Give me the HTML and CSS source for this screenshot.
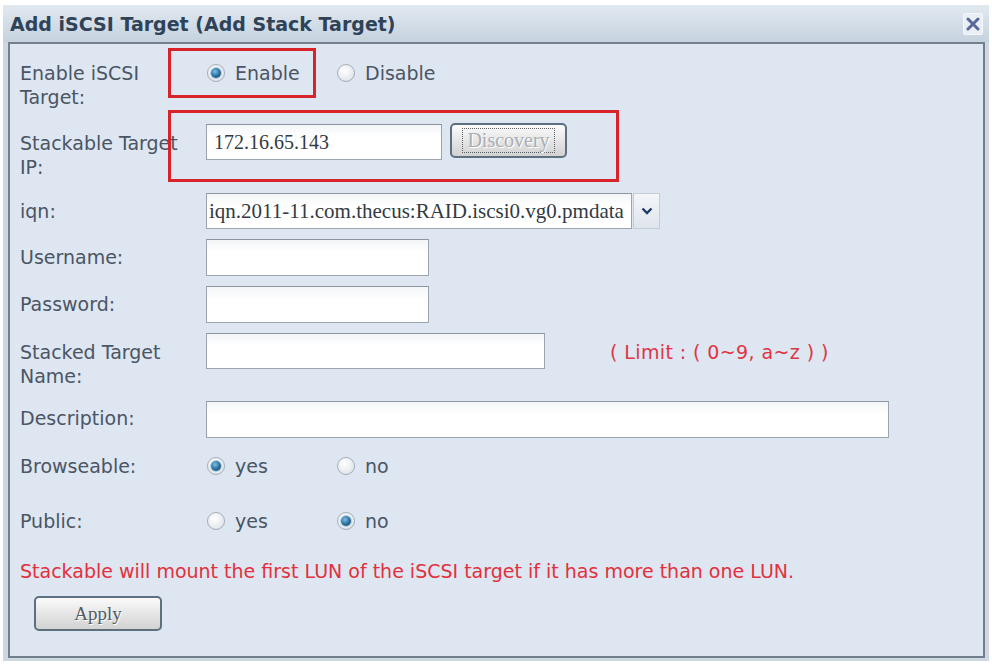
FILE: index.html
```html
<!DOCTYPE html>
<html>
<head>
<meta charset="utf-8">
<title>Add iSCSI Target</title>
<link rel="stylesheet" href="styles.css">
</head>
<body>
<div class="dialog">
  <div class="titlebar">
    <span class="title">Add iSCSI Target (Add Stack Target)</span>
    <span class="close"><svg width="14" height="14" viewBox="0 0 14 14"><path d="M2 2 L12 12 M12 2 L2 12" stroke="#5a6898" stroke-width="3" stroke-linecap="round"/></svg></span>
  </div>
  <div class="panel">
    <div class="mark mark1"></div>
    <div class="mark mark2"></div>

    <div class="row r1">
      <div class="label">Enable iSCSI<br>Target:</div>
      <div class="radios">
        <span class="opt"><span class="radio on"></span>Enable</span>
        <span class="opt"><span class="radio"></span>Disable</span>
      </div>
    </div>

    <div class="row r2">
      <div class="label lp7">Stackable Target<br>IP:</div>
      <div class="field">
        <div class="input ip serif">172.16.65.143</div>
        <div class="btn discover"><span class="focus">Discovery</span></div>
      </div>
    </div>

    <div class="row r3">
      <div class="label lp6">iqn:</div>
      <div class="field">
        <div class="select">
          <div class="input sel-text serif">iqn.2011-11.com.thecus:RAID.iscsi0.vg0.pmdata</div>
          <div class="sel-arrow"><svg width="12" height="8" viewBox="0 0 12 8"><path d="M1.5 1.5 L6 6 L10.5 1.5" fill="none" stroke="#22386a" stroke-width="2.4"/></svg></div>
        </div>
      </div>
    </div>

    <div class="row r4">
      <div class="label lp6">Username:</div>
      <div class="field"><div class="input short"></div></div>
    </div>

    <div class="row r5">
      <div class="label lp6">Password:</div>
      <div class="field"><div class="input short"></div></div>
    </div>

    <div class="row r6">
      <div class="label lp7">Stacked Target<br>Name:</div>
      <div class="field">
        <div class="input medium"></div>
        <div class="limit">( Limit : ( 0~9, a~z ) )</div>
      </div>
    </div>

    <div class="row r7">
      <div class="label lp5">Description:</div>
      <div class="field"><div class="input wide"></div></div>
    </div>

    <div class="row r8">
      <div class="label">Browseable:</div>
      <div class="radios">
        <span class="opt"><span class="radio on"></span>yes</span>
        <span class="opt"><span class="radio"></span>no</span>
      </div>
    </div>

    <div class="row r9">
      <div class="label">Public:</div>
      <div class="radios">
        <span class="opt"><span class="radio"></span>yes</span>
        <span class="opt"><span class="radio on"></span>no</span>
      </div>
    </div>

    <div class="message">Stackable will mount the first LUN of the iSCSI target if it has more than one LUN.</div>

    <div class="btn apply">Apply</div>
  </div>
</div>
</body>
</html>
```

FILE: styles.css
```css
html, body {
  margin: 0;
  padding: 0;
  background: #ffffff;
}
body {
  width: 992px;
  height: 664px;
  overflow: hidden;
  font-family: "DejaVu Sans", Verdana, sans-serif;
}
.dialog {
  margin: 5px 3px 0 3px;
  height: 656px;
  background: #cdd8e3;
  box-sizing: border-box;
}
.titlebar {
  height: 37px;
  display: flex;
  align-items: center;
  justify-content: space-between;
  padding: 0 6px 0 7px;
  background: linear-gradient(#e2e9f0, #c5d2df);
  box-sizing: border-box;
}
.title {
  font-weight: bold;
  font-size: 19px;
  color: #2f4358;
}
.close {
  width: 20px;
  height: 22px;
  background: #e9eff5;
  border: 1px solid #f6f8fb;
  border-radius: 2px;
  display: flex;
  align-items: center;
  justify-content: center;
  box-sizing: border-box;
}
.panel {
  position: relative;
  margin: 0 4px 0 5px;
  height: 616px;
  box-sizing: border-box;
  border: 2px solid #737f8d;
  background: #dde6f1;
  padding: 17px 0 0 10px;
}
.mark {
  position: absolute;
  border: 3px solid #d8232b;
  box-sizing: border-box;
}
.mark1 { left: 158px; top: 4px; width: 148px; height: 50px; }
.mark2 { left: 158px; top: 66px; width: 451px; height: 72px; }

.row {
  display: flex;
  align-items: flex-start;
}
.label {
  width: 186px;
  flex: none;
  font-size: 19px;
  line-height: 24px;
  color: #4b5564;
  white-space: nowrap;
}
.lp5 { padding-top: 5px; }
.lp6 { padding-top: 6px; }
.lp7 { padding-top: 7px; }

.r1 { height: 63px; }
.r2 { height: 69px; }
.r3 { height: 46px; }
.r4 { height: 47px; }
.r5 { height: 47px; }
.r6 { height: 68px; }
.r7 { height: 53px; }
.r8 { height: 55px; }
.r9 { height: 50px; }

.field {
  display: flex;
  align-items: flex-start;
}
.input {
  box-sizing: border-box;
  height: 37px;
  background: linear-gradient(#f3f5f7, #ffffff 35%);
  border: 1px solid #9ca4ad;
  border-top-color: #8d959e;
}
.serif {
  font-family: "Liberation Serif", "Times New Roman", serif;
  font-size: 20px;
  color: #333a42;
  line-height: 34px;
  padding-left: 7px;
  white-space: nowrap;
  overflow: hidden;
}
.ip { width: 236px; height: 36px; }
.short { width: 223px; }
.medium { width: 339px; height: 36px; }
.wide { width: 683px; }

.select {
  display: flex;
  height: 36px;
}
.sel-text {
  width: 426px;
  height: 36px;
  padding-left: 2px;
  font-size: 21px;
}
.sel-arrow {
  width: 27px;
  height: 36px;
  margin-left: 1px;
  box-sizing: border-box;
  border: 1px solid #c4ccd5;
  background: linear-gradient(#f4f6f9, #dfe5ec);
  display: flex;
  align-items: center;
  justify-content: center;
}

.btn {
  box-sizing: border-box;
  border: 2px solid #5e6f80;
  border-radius: 5px;
  background: linear-gradient(#fbfbfb, #e6e6e6 50%, #d2d2d2);
  font-family: "Liberation Serif", "Times New Roman", serif;
  display: flex;
  align-items: center;
  justify-content: center;
}
.discover {
  width: 117px;
  height: 35px;
  margin-left: 8px;
  margin-top: -1px;
}
.focus {
  border: 1px dotted #5a5f66;
  padding: 1px 4px;
  font-size: 20px;
  line-height: 21px;
  color: #a9aeb4;
  text-shadow: 1px 1px 0 #ffffff;
}
.apply {
  width: 128px;
  height: 35px;
  margin: 13px 0 0 14px;
  font-size: 19px;
  color: #555b62;
  text-shadow: 1px 1px 0 #ffffff;
}

.limit {
  margin: 7px 0 0 65px;
  font-size: 19px;
  letter-spacing: 0.4px;
  line-height: 24px;
  color: #e03444;
  white-space: nowrap;
}

.radios {
  display: flex;
  font-size: 19px;
  line-height: 24px;
  color: #4b5564;
}
.opt {
  width: 130px;
  display: flex;
  align-items: center;
}
.radio {
  width: 18px;
  height: 18px;
  margin: 0 10px 0 1px;
  box-sizing: border-box;
  border-radius: 50%;
  border: 1px solid #a5adb6;
  background: radial-gradient(circle at 40% 35%, #ffffff, #e4e8ec 70%, #cfd5db);
  position: relative;
}
.radio.on::after {
  content: "";
  position: absolute;
  left: 3px;
  top: 3px;
  width: 10px;
  height: 10px;
  border-radius: 50%;
  background: radial-gradient(circle at 40% 35%, #7cc0e6, #2a6a98 55%, #16395a);
  box-shadow: 0 0 0 1px #a8d0ea;
}

.message {
  font-size: 19px;
  line-height: 24px;
  color: #e3303c;
  white-space: nowrap;
}
```
